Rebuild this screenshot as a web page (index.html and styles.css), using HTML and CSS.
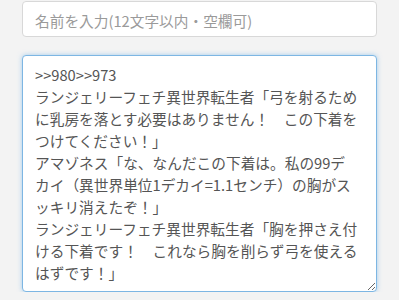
FILE: index.html
```html
<!DOCTYPE html>
<html lang="ja">
<head>
  <meta charset="UTF-8" />
  <meta name="viewport" content="width=device-width, initial-scale=1.0" />
  <title>投稿フォーム</title>
  <link rel="stylesheet" href="styles.css">
</head>
<body>
  <form class="post-form">
    <input type="text" class="form-control name-input" placeholder="名前を入力(12文字以内・空欄可)" />
    <textarea class="form-control body-input">&gt;&gt;980&gt;&gt;973
ランジェリーフェチ異世界転生者「弓を射るために乳房を落とす必要はありません！　この下着をつけてください！」
アマゾネス「な、なんだこの下着は。私の99デカイ（異世界単位1デカイ=1.1センチ）の胸がスッキリ消えたぞ！」
ランジェリーフェチ異世界転生者「胸を押さえ付ける下着です！　これなら胸を削らず弓を使えるはずです！」</textarea>
  </form>
</body>
</html>
```

FILE: styles.css
```css
body {
  margin: 0;
  background: #f3f3f3;
  font-family: "Noto Sans CJK JP", sans-serif;
  color: #555;
}
.post-form {
  display: flex;
  flex-direction: column;
  gap: 18px;
  padding: 1px 22px 0;
}
.form-control {
  box-sizing: border-box;
  width: 355px;
  margin: 0;
  font-family: "Noto Sans CJK JP", sans-serif;
  font-size: 14.7px;
  color: #555;
  background: #fff;
  border: 1px solid #d8d8d8;
  border-radius: 4px;
  outline: none;
}
.name-input {
  height: 36px;
  padding: 2px 12px 0;
}
.name-input::placeholder {
  color: #9a9a9a;
}
.body-input {
  height: 237px;
  padding: 8px 17px 6px 12px;
  line-height: 1.5;
  overflow: hidden;
  border-color: #7db6e3;
  box-shadow: 0 0 5px rgba(102, 175, 233, 0.55);
}
```
